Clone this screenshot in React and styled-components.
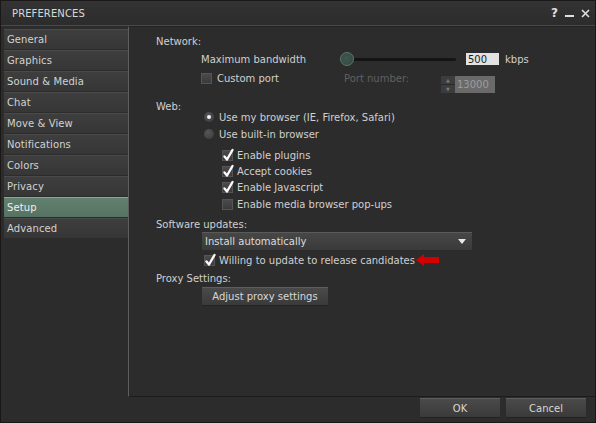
import React from "react";
import styled, { createGlobalStyle } from "styled-components";

const Global = createGlobalStyle`
  html, body {
    margin: 0;
    padding: 0;
    background: #1e1b1a;
  }
  body {
    font-family: "DejaVu Sans", "Liberation Sans", sans-serif;
    font-size: 10px;
    color: #d0d0d0;
  }
`;

const Window = styled.div`
  width: 596px;
  height: 423px;
  box-sizing: border-box;
  background: #2c2c2c;
  border: 1px solid #1a1716;
  display: flex;
  flex-direction: column;
  overflow: hidden;
`;

const TitleBar = styled.div`
  height: 24px;
  flex: none;
  display: flex;
  align-items: center;
  justify-content: space-between;
  padding: 0 5px 0 11px;
  background: linear-gradient(#333, #2c2c2c);
  border-bottom: 1px solid #4a4a4a;
  font-size: 10px;
  color: #d8d8d8;
  letter-spacing: 0.1px;
`;

const TitleIcons = styled.div`
  display: flex;
  gap: 7px;
  align-items: center;
  color: #e0e0e0;
  font-size: 12px;
  font-weight: bold;
`;

const Body = styled.div`
  flex: 1;
  display: flex;
`;

const Tabs = styled.div`
  width: 124px;
  padding: 3px 0 0 3px;
  display: flex;
  flex-direction: column;
  gap: 1px;
`;

const Tab = styled.div`
  height: 20px;
  display: flex;
  align-items: center;
  padding-left: 3px;
  box-sizing: border-box;
  border-top: 1px solid ${(p) => (p.$active ? "#8aa89c" : "#4a4a4a")};
  background: ${(p) =>
    p.$active ? "linear-gradient(#62806f, #557262)" : "linear-gradient(#3e3e3e, #363636)"};
  color: ${(p) => (p.$active ? "#f0f0f0" : "#d2d2d2")};
  font-size: 10px;
  letter-spacing: 0.1px;
`;

const Right = styled.div`
  flex: 1;
  display: flex;
  flex-direction: column;
`;

const Panel = styled.div`
  height: 371px;
  box-sizing: border-box;
  border-left: 1px solid #5e5e5e;
  border-bottom: 1px solid #1c1c1c;
  border-top: 1px solid #232323;
  padding: 7px 0 0 27px;
  display: flex;
  flex-direction: column;
`;

const Row = styled.div`
  display: flex;
  align-items: center;
  flex: none;
  height: ${(p) => p.$h ?? 16}px;
  margin-top: ${(p) => p.$mt ?? 0}px;
  padding-left: ${(p) => p.$indent ?? 0}px;
  gap: ${(p) => p.$gap ?? 5}px;
`;

const Label = styled.span`
  color: ${(p) => (p.$dim ? "#616161" : "#d0d0d0")};
  width: ${(p) => (p.$w ? `${p.$w}px` : "auto")};
  flex: none;
  white-space: nowrap;
`;

const Lowered = styled.span`
  align-self: flex-start;
  margin-top: ${(p) => p.$top}px;
  display: flex;
  flex: none;
`;

const Box = styled.span`
  width: 11px;
  height: 11px;
  box-sizing: border-box;
  background: linear-gradient(#4a4a4a, #3a3a3a);
  border: 1px solid #555;
  position: relative;
  flex: none;
`;

const Radio = styled.span`
  width: 10px;
  height: 10px;
  border-radius: 50%;
  background: radial-gradient(circle at 40% 35%, #555, #3a3a3a);
  display: flex;
  align-items: center;
  justify-content: center;
  flex: none;
  &::after {
    content: "";
    width: 4px;
    height: 4px;
    border-radius: 50%;
    background: ${(p) => (p.$on ? "#f4f4f4" : "transparent")};
  }
`;

const Check = ({ on }) => (
  <Box>
    {on && (
      <svg
        width="13"
        height="14"
        viewBox="0 0 13 14"
        style={{ position: "absolute", left: -1, top: -3 }}
      >
        <path
          d="M2.5 8.5 L5 11.5 L10.5 2"
          fill="none"
          stroke="#fafafa"
          strokeWidth="2.4"
          strokeLinecap="round"
          strokeLinejoin="round"
        />
      </svg>
    )}
  </Box>
);

const Slider = styled.div`
  width: 116px;
  height: 14px;
  position: relative;
  flex: none;
  &::before {
    content: "";
    position: absolute;
    left: 6px;
    right: 0;
    top: 6px;
    height: 3px;
    border-radius: 2px;
    background: #151515;
  }
`;

const Knob = styled.span`
  position: absolute;
  left: 0;
  top: 0;
  width: 14px;
  height: 14px;
  border-radius: 50%;
  background: radial-gradient(circle at 45% 45%, #40584f, #30473f);
  border: 1px solid #5d786d;
  box-sizing: border-box;
`;

const Field = styled.span`
  height: ${(p) => p.$h ?? 12}px;
  width: ${(p) => p.$w}px;
  box-sizing: border-box;
  background: ${(p) => (p.$dim ? "#6a6a6a" : "#e2e2e2")};
  color: ${(p) => (p.$dim ? "#9c9c9c" : "#1a1a1a")};
  display: flex;
  align-items: center;
  padding-left: 2px;
  font-size: 10px;
  flex: none;
`;

const Spinner = styled.span`
  width: 14px;
  height: 17px;
  display: flex;
  flex-direction: column;
  gap: 1px;
  flex: none;
  span {
    flex: 1;
    background: #3c3c3c;
    color: #777;
    font-size: 5px;
    display: flex;
    align-items: center;
    justify-content: center;
  }
`;

const Select = styled.div`
  width: 270px;
  height: 18px;
  box-sizing: border-box;
  background: linear-gradient(#474747, #3a3a3a);
  border-top: 1px solid #5a5a5a;
  display: flex;
  align-items: center;
  justify-content: space-between;
  padding: 0 6px 0 3px;
  color: #dcdcdc;
`;

const Button = styled.div`
  width: ${(p) => p.$w}px;
  height: ${(p) => p.$h ?? 19}px;
  box-sizing: border-box;
  background: linear-gradient(#4a4a4a, #3a3a3a);
  border-top: 1px solid #5e5e5e;
  border-bottom: 1px solid #222;
  display: flex;
  align-items: center;
  justify-content: center;
  color: #d8d8d8;
  flex: none;
`;

const Footer = styled.div`
  display: flex;
  justify-content: flex-end;
  gap: 6px;
  padding: 1px 9px 0 0;
`;

const tabs = [
  "General",
  "Graphics",
  "Sound & Media",
  "Chat",
  "Move & View",
  "Notifications",
  "Colors",
  "Privacy",
  "Setup",
  "Advanced",
];

export default function App() {
  return (
    <>
      <Global />
      <Window>
        <TitleBar>
          <span>PREFERENCES</span>
          <TitleIcons>
            <span>?</span>
            <svg width="9" height="10" viewBox="0 0 9 10">
              <rect x="0" y="7" width="9" height="2" fill="#e0e0e0" />
            </svg>
            <svg width="9" height="9" viewBox="0 0 9 9">
              <path d="M1 1 L8 8 M8 1 L1 8" stroke="#e0e0e0" strokeWidth="1.6" />
            </svg>
          </TitleIcons>
        </TitleBar>
        <Body>
          <Tabs>
            {tabs.map((t) => (
              <Tab key={t} $active={t === "Setup"}>
                {t}
              </Tab>
            ))}
          </Tabs>
          <Right>
            <Panel>
              <Row $h={14}>Network:</Row>
              <Row $indent={45} $h={18} $mt={2} $gap={0}>
                <Label $w={139}>Maximum bandwidth</Label>
                <Slider>
                  <Knob />
                </Slider>
                <Field $w={33} style={{ marginLeft: 10 }}>500</Field>
                <Label style={{ marginLeft: 6 }}>kbps</Label>
              </Row>
              <Row $indent={45} $h={16} $mt={2} $gap={0}>
                <Box />
                <Label $w={127} style={{ marginLeft: 5 }}>Custom port</Label>
                <Lowered $top={3}>
                  <Label $w={97} $dim>Port number:</Label>
                </Lowered>
                <Lowered $top={6}>
                  <Spinner>
                    <span>▲</span>
                    <span>▼</span>
                  </Spinner>
                  <Field $w={40} $h={17} $dim>13000</Field>
                </Lowered>
              </Row>
              <Row $h={12} $mt={14}>Web:</Row>
              <Row $indent={48} $h={10}>
                <Radio $on />
                <Label>Use my browser (IE, Firefox, Safari)</Label>
              </Row>
              <Row $indent={48} $h={24}>
                <Radio />
                <Label>Use built-in browser</Label>
              </Row>
              <Row $indent={66} $h={16} $mt={1} $gap={4}>
                <Check on />
                <Label>Enable plugins</Label>
              </Row>
              <Row $indent={66} $h={16} $gap={4}>
                <Check on />
                <Label>Accept cookies</Label>
              </Row>
              <Row $indent={66} $h={16} $gap={4}>
                <Check on />
                <Label>Enable Javascript</Label>
              </Row>
              <Row $indent={66} $h={16} $mt={1} $gap={4}>
                <Box />
                <Label>Enable media browser pop-ups</Label>
              </Row>
              <Row $h={14} $mt={5}>Software updates:</Row>
              <Row $indent={46} $h={18} $mt={1}>
                <Select>
                  <span>Install automatically</span>
                  <svg width="8" height="5" viewBox="0 0 8 5">
                    <path d="M0 0 H8 L4 5 Z" fill="#e8e8e8" />
                  </svg>
                </Select>
              </Row>
              <Row $indent={48} $h={18} $mt={1} $gap={4}>
                <Check on />
                <Label>Willing to update to release candidates</Label>
                <svg width="24" height="12" viewBox="0 0 24 12" style={{ marginLeft: -3 }}>
                  <path d="M0 6 L8 0 V3 H23 V9 H8 V12 Z" fill="#d40000" />
                </svg>
              </Row>
              <Row $h={14} $mt={2}>Proxy Settings:</Row>
              <Row $indent={46} $h={19} $mt={2}>
                <Button $w={126}>Adjust proxy settings</Button>
              </Row>
            </Panel>
            <Footer>
              <Button $w={80} $h={20}>OK</Button>
              <Button $w={80} $h={20}>Cancel</Button>
            </Footer>
          </Right>
        </Body>
      </Window>
    </>
  );
}
